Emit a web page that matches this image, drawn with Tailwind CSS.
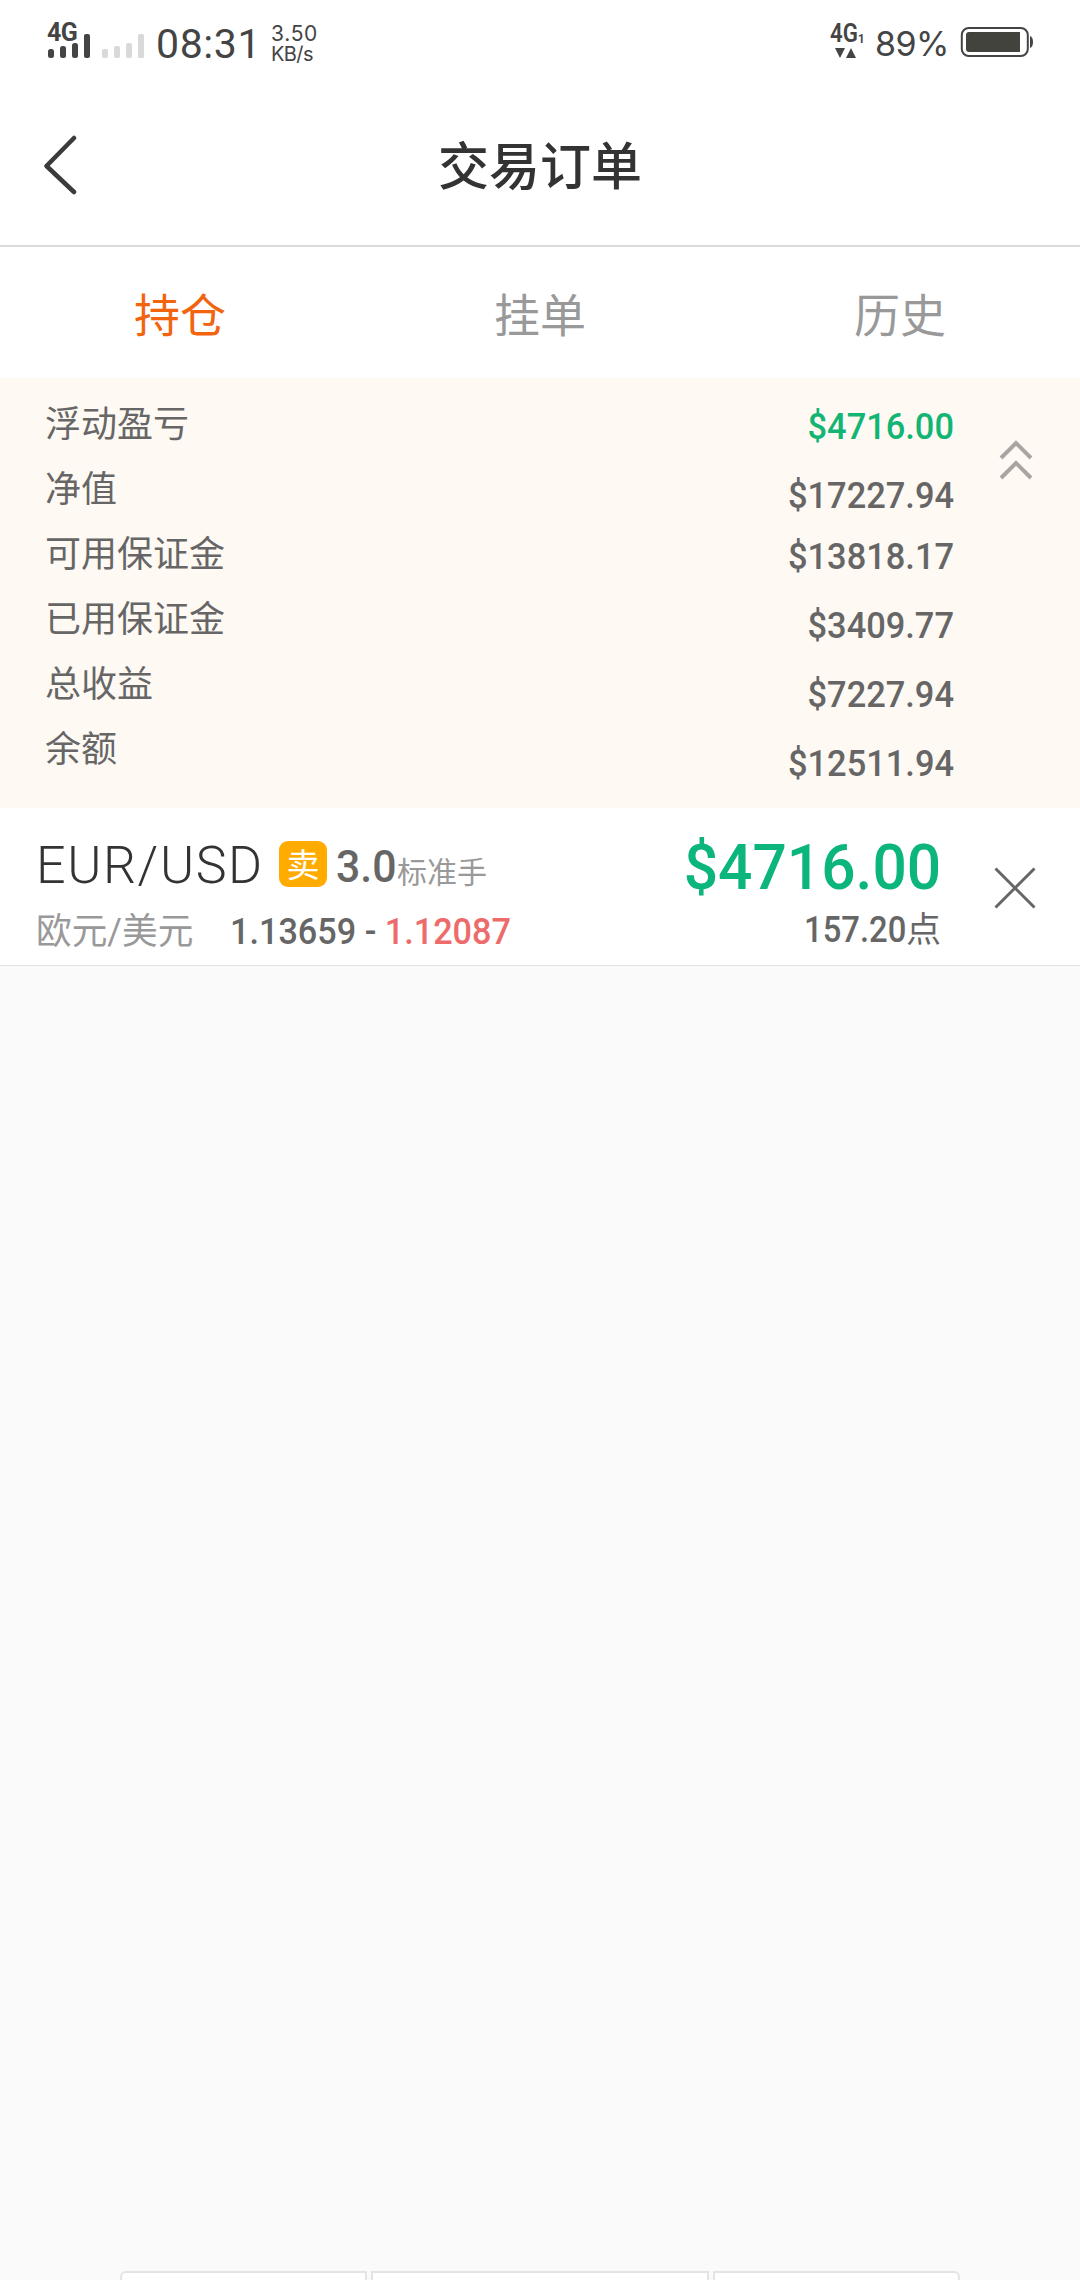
<!DOCTYPE html>
<html lang="zh-CN">
<head>
<meta charset="utf-8">
<title>交易订单</title>
<script src="https://cdn.jsdelivr.net/npm/@tailwindcss/browser@4"></script>
</head>
<body class="bg-[#fafafa]">
<div class="flex h-[2280px] w-[1080px] flex-col overflow-hidden font-['Roboto','Noto_Sans_CJK_SC',sans-serif] text-[#666] whitespace-nowrap">

  <!-- status bar -->
  <header class="flex h-[84px] shrink-0 items-start justify-between bg-white pl-[47px] pr-[47px] text-[#444]">
    <div class="flex">
      <div class="w-[43px] pt-[22px]">
        <div class="h-[12px] text-[25px] leading-[22px] font-bold tracking-[-0.5px]">4G</div>
        <svg class="h-[25px] w-[43px]" viewBox="0 0 43 25" fill="#444"><rect x="1" y="15" width="6" height="9" rx="2.5"/><rect x="13" y="12" width="6" height="12" rx="2.5"/><rect x="25" y="9" width="6" height="15" rx="2.5"/><rect x="37" y="0" width="6" height="24" rx="2"/></svg>
      </div>
      <svg class="mt-[34px] ml-[11px] h-[25px] w-[43px]" viewBox="0 0 43 25" fill="#d9d9d9"><rect x="1" y="15" width="6" height="9" rx="2"/><rect x="13" y="12" width="6" height="12" rx="2"/><rect x="25" y="9" width="6" height="15" rx="2"/><rect x="37" y="0" width="6" height="24" rx="1.5"/></svg>
      <div class="ml-[12px] w-[115px] pt-[24px] text-[41px] leading-[40px] tracking-[0.6px]">08:31</div>
      <div class="pt-[24px] font-['Inter'] text-[20px] leading-[20px]"><div class="text-[21px] tracking-[0.7px]">3.50</div><div class="text-[20px] tracking-[-0.6px]">KB/s</div></div>
    </div>
    <div class="flex">
      <div class="w-[45px] pt-[24px]">
        <div class="flex h-[20px] w-[37px] origin-left scale-x-89 items-end text-[25px] leading-[20px] font-semibold">4G<span class="text-[13px] leading-[11px] font-bold">1</span></div>
        <svg class="ml-[5px] mt-[4px] h-[11px] w-[22px]" viewBox="0 0 22 11" fill="#444"><path d="M0 0h10L5 10zM11 10h10L16 0z"/></svg>
      </div>
      <div class="w-[85px] pt-[24px] font-['Inter'] text-[34px] leading-[40px] tracking-[-0.5px]">89%</div>
      <svg class="mt-[26px] h-[32px] w-[73px]" viewBox="0 0 73 32"><rect x="1.8" y="2" width="66" height="28" rx="7" fill="none" stroke="#444" stroke-width="2"/><path d="M9 6h51v20H9q-3 0-3-3V9q0-3 3-3z" fill="#42433d"/><path d="M70 10q3 1 3 6t-3 6z" fill="#444"/></svg>
    </div>
  </header>

  <!-- title bar -->
  <div class="grid h-[163px] shrink-0 grid-cols-[1fr_auto_1fr] items-center border-b-2 border-[#dadada] bg-white px-[43px]">
    <svg class="h-[60px] w-[36px]" viewBox="0 0 36 60" fill="none" stroke="#3b3b3b" stroke-width="4.5" stroke-linecap="round" stroke-linejoin="round"><path d="M31 3L3.500 31L31 57"/></svg>
    <h1 class="pt-[7px] text-[51px] leading-[60px] font-medium text-[#333]">交易订单</h1>
  </div>

  <!-- tabs -->
  <nav class="grid h-[131px] shrink-0 grid-cols-3 items-center bg-white pt-[7px] text-center text-[46px] text-[#999]">
    <span class="text-[#f2640e]">持仓</span><span>挂单</span><span>历史</span>
  </nav>

  <!-- account summary -->
  <section class="flex h-[430px] shrink-0 items-start bg-[#fef9f3] pl-[45px]">
    <div class="mt-[15px] flex flex-1 flex-col text-[36px] leading-[65px]">
      <span>浮动盈亏</span><span>净值</span><span>可用保证金</span><span>已用保证金</span><span>总收益</span><span>余额</span>
    </div>
    <div class="mt-[14px] flex w-[300px] origin-right scale-x-93 flex-col text-right text-[37px] leading-[69px] font-medium">
      <span class="text-[#12b574]">$4716.00</span><span>$17227.94</span><span class="-mt-[8px]">$13818.17</span><span>$3409.77</span><span>$7227.94</span><span>$12511.94</span>
    </div>
    <svg class="mt-[61px] ml-[44px] mr-[46px] h-[42px] w-[36px]" viewBox="0 0 36 42" fill="none" stroke="#aaa5a3" stroke-width="4"><path d="M3 19L18 4L33 19M3 39L18 24L33 39"/></svg>
  </section>

  <!-- open position -->
  <section class="flex h-[158px] shrink-0 border-b border-[#e0e0e0] bg-white pl-[36px]">
    <div class="flex flex-1 flex-col">
      <div class="flex h-[94px] items-start">
        <div class="w-[243px] pt-[28px] text-[52px] leading-[60px] font-light tracking-[1.6px] text-[#333]">EUR/USD</div>
        <div class="mt-[33px] flex h-[46px] w-[48px] items-center justify-center rounded-[9px] bg-[#ffab00] pt-[3px] text-[33px] leading-none text-white">卖</div>
        <div class="ml-[9px] w-[61px] origin-left scale-x-95 pt-[34px] text-[45px] leading-[50px] font-medium">3.0</div>
        <div class="pt-[45px] text-[30px] leading-[40px] text-[#999]">标准手</div>
      </div>
      <div class="flex pt-[2px] text-[36px] leading-[56px]">
        <div class="w-[194px] origin-left scale-x-99 text-[#999]">欧元/美元</div>
        <div class="origin-left scale-x-95 font-medium">1.13659 - <span class="text-[#ed6b6b]">1.12087</span></div>
      </div>
    </div>
    <div class="flex flex-col items-end">
      <div class="h-[94px] origin-right scale-x-96 pt-[25px] text-[63px] leading-[70px] font-medium text-[#0bb57b]">$4716.00</div>
      <div class="flex text-[36px] leading-[56px] font-medium"><span class="origin-right scale-x-91">157.20</span><span class="pt-[1px] text-[35px] font-normal">点</span></div>
    </div>
    <svg class="mt-[59px] ml-[53px] mr-[44px] h-[42px] w-[42px]" viewBox="0 0 42 42" fill="none" stroke="#666" stroke-width="3"><path d="M1.500 1.500L40.500 40.500M40.500 1.500L1.500 40.500"/></svg>
  </section>

  <!-- bottom cards -->
  <div class="mt-auto flex h-[9px] shrink-0 gap-[4px] px-[120px]">
    <div class="w-[247px] rounded-tl-[6px] border-2 border-b-0 border-[#e4e4e4] bg-white"></div>
    <div class="flex-1 border-2 border-b-0 border-[#e4e4e4] bg-white"></div>
    <div class="w-[247px] rounded-tr-[6px] border-2 border-b-0 border-[#e4e4e4] bg-white"></div>
  </div>
</div>
</body>
</html>
